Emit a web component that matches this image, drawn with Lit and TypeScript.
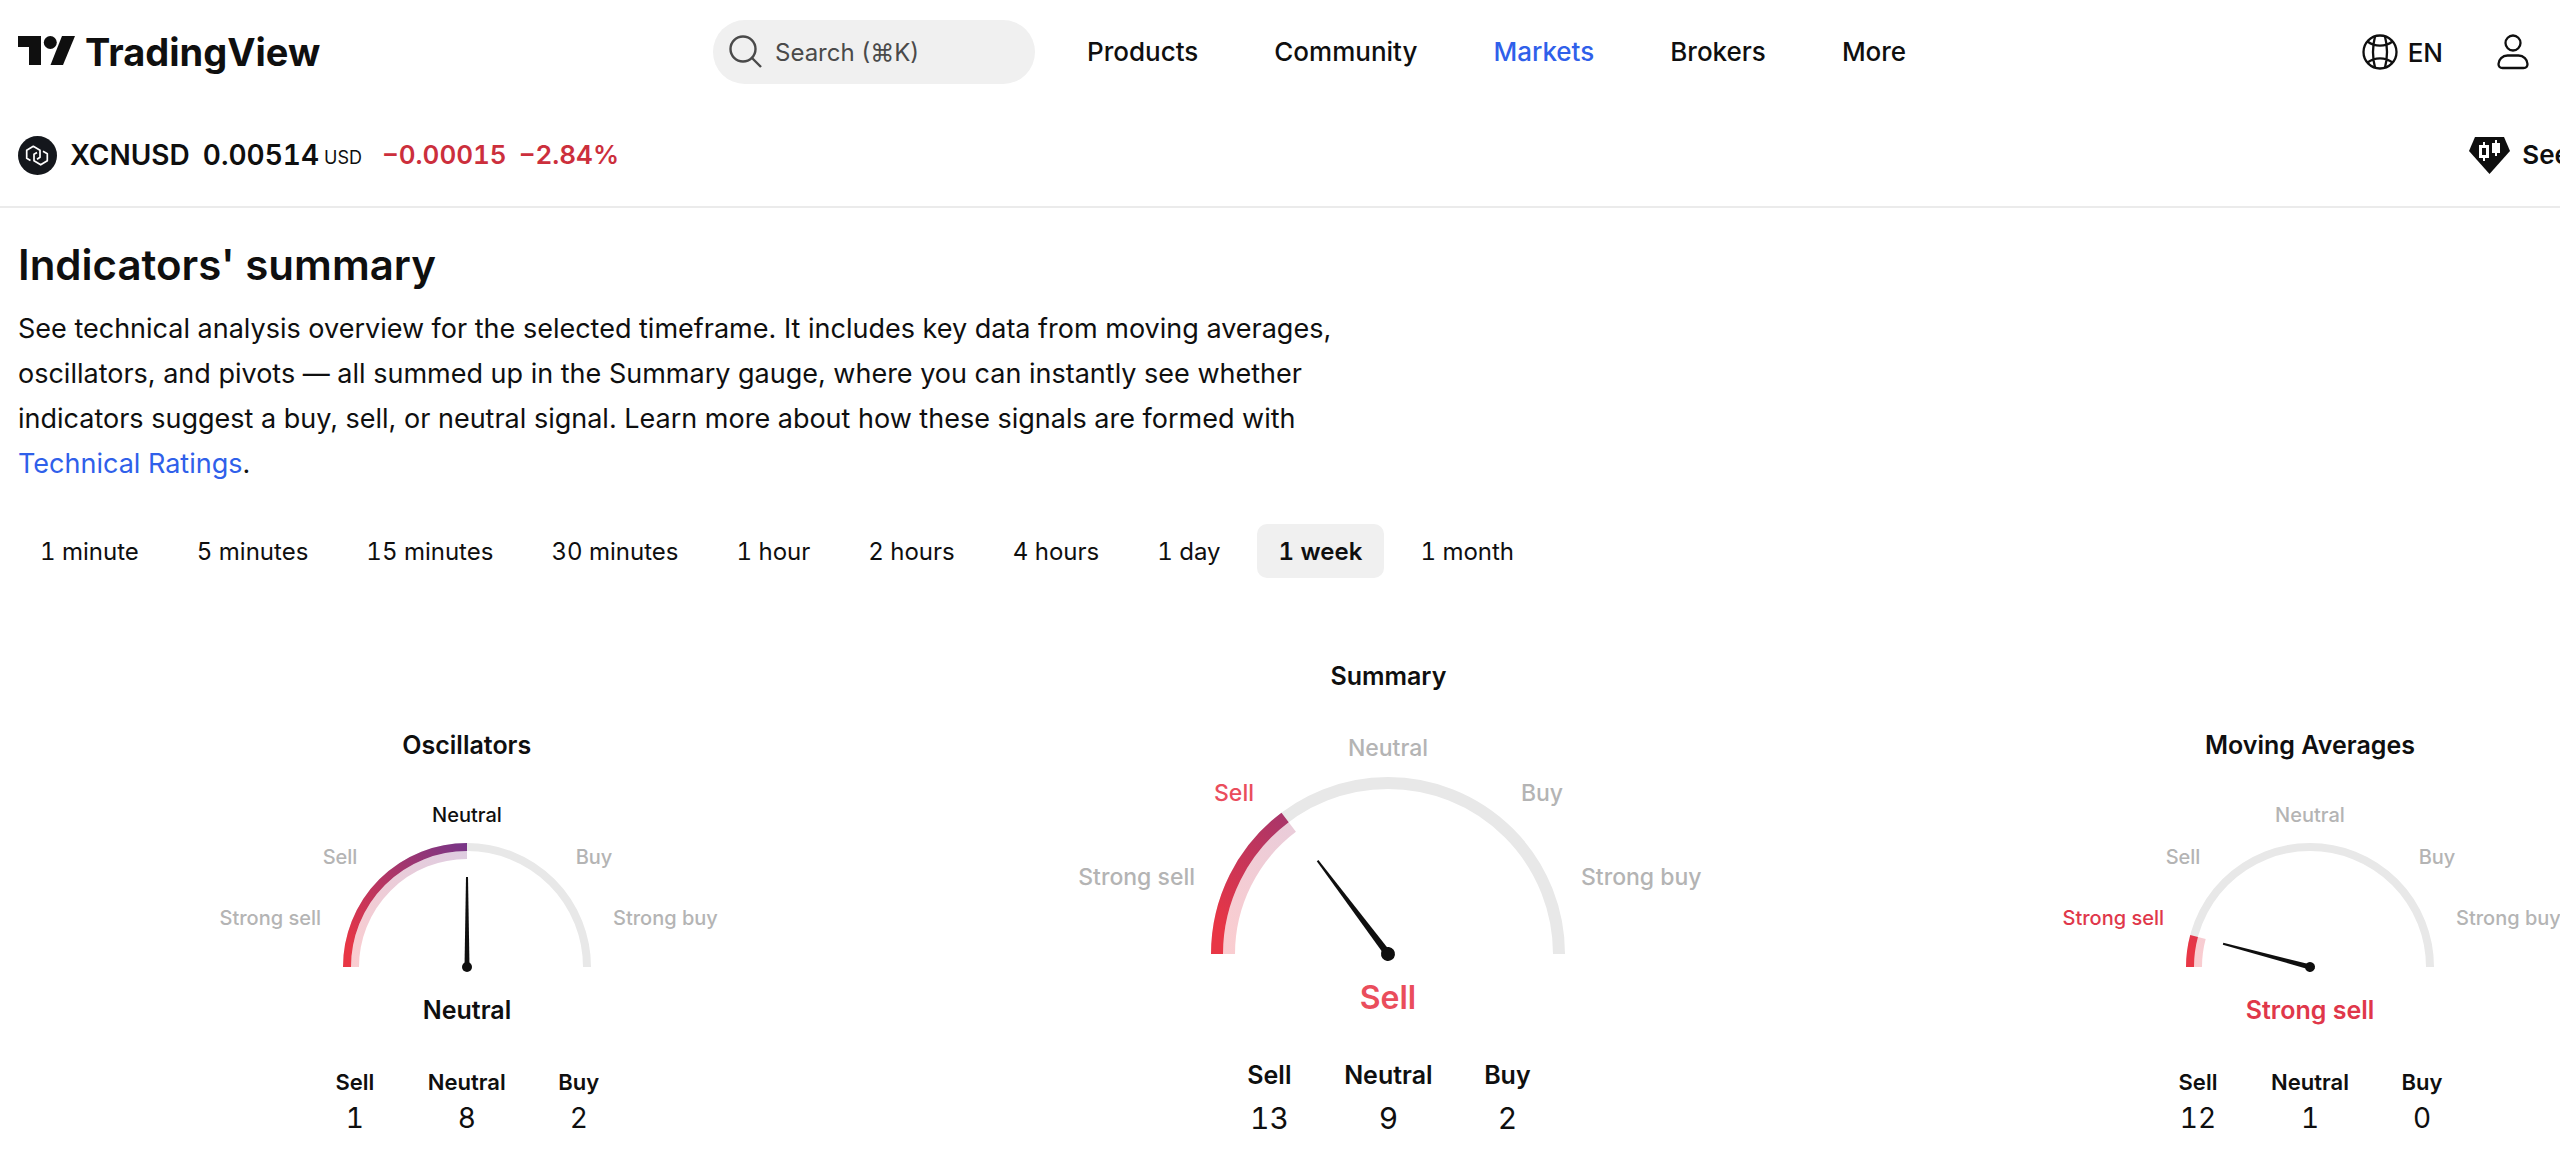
import { LitElement, html, css, svg } from "lit";
import { customElement, property, state } from "lit/decorators.js";
import { classMap } from "lit/directives/class-map.js";

type Rating = "strong-sell" | "sell" | "neutral" | "buy" | "strong-buy";

const RATING_LABELS: Record<Rating, string> = {
  "strong-sell": "Strong sell",
  sell: "Sell",
  neutral: "Neutral",
  buy: "Buy",
  "strong-buy": "Strong buy",
};

interface GaugeData {
  title: string;
  rating: Rating;
  angle: number;
  sell: number;
  neutral: number;
  buy: number;
  large: boolean;
}

interface Geometry {
  width: number;
  height: number;
  cy: number;
  radius: number;
  band: number;
  needle: number;
  hub: number;
  topY: number;
  midX: number;
  midY: number;
  sideX: number;
  sideY: number;
  resultY: number;
}

const SMALL: Geometry = {
  width: 560, height: 240, cy: 177, radius: 124, band: 8, needle: 90, hub: 5,
  topY: 32, midX: 127, midY: 74, sideX: 146, sideY: 135, resultY: 229,
};

const LARGE: Geometry = {
  width: 680, height: 300, cy: 233, radius: 177, band: 12, needle: 117, hub: 7,
  topY: 35, midX: 154, midY: 80, sideX: 193, sideY: 164, resultY: 288,
};

@customElement("rating-gauge")
export class RatingGauge extends LitElement {
  @property({ attribute: false }) data!: GaugeData;

  static styles = css`
    :host { display: block; color: #0f0f0f; }
    .gauge { display: flex; flex-direction: column; align-items: center; }
    .title { margin: 0 0 29px; font-size: 25px; line-height: 32px; font-weight: 600; }
    .dial { display: block; max-width: 100%; }
    .label { font-size: 20px; font-weight: 500; fill: #b4b4b4; }
    .result { font-size: 25px; font-weight: 600; }
    .large .label { font-size: 23px; }
    .large .result { font-size: 32px; }
    .label.strong-sell, .result.strong-sell { fill: #e0374a; }
    .label.sell, .result.sell { fill: #ea4d5c; }
    .label.neutral, .result.neutral { fill: #0f0f0f; }
    .label.buy, .label.strong-buy, .result.buy, .result.strong-buy { fill: #2f60ea; }
    .track { fill: none; stroke: #e8e8e8; }
    .value, .halo { fill: none; }
    .halo { stroke-opacity: 0.25; }
    .needle { fill: #0f0f0f; }
    .counts { display: grid; grid-template-columns: repeat(3, 112px); margin: 36px 0 0; text-align: center; }
    .large .counts { grid-template-columns: repeat(3, 119px); margin-top: 38px; }
    .name { font-size: 22px; line-height: 32px; font-weight: 600; }
    .number { margin: 0; font-size: 28px; line-height: 40px; font-variant-numeric: tabular-nums; }
    .large .name { font-size: 25px; margin-bottom: 7px; }
    .large .number { font-size: 30px; }
  `;

  private arc(g: Geometry, r: number, degrees: number) {
    const cx = g.width / 2;
    const a = (degrees * Math.PI) / 180;
    return `M${cx - r} ${g.cy}A${r} ${r} 0 0 1 ${cx - r * Math.cos(a)} ${g.cy - r * Math.sin(a)}`;
  }

  private label(g: Geometry, rating: Rating, x: number, y: number, anchor: string) {
    const active = rating === this.data.rating;
    return svg`<text class=${active ? `label ${rating}` : "label"} x=${x} y=${y} text-anchor=${anchor}>${RATING_LABELS[rating]}</text>`;
  }

  render() {
    const d = this.data;
    const g = d.large ? LARGE : SMALL;
    const cx = g.width / 2;
    const r = g.radius - g.band / 2;
    return html`
      <section class=${classMap({ gauge: true, large: d.large })}>
        <h3 class="title">${d.title}</h3>
        <svg class="dial" width=${g.width} height=${g.height} viewBox="0 0 ${g.width} ${g.height}" role="img" aria-label=${d.title}>
          <defs>
            <linearGradient id="sweep" gradientUnits="userSpaceOnUse" x1=${cx - g.radius} y1=${g.cy} x2=${cx} y2=${g.cy - g.radius}>
              <stop offset="0.1" stop-color="#e83645"></stop>
              <stop offset="1" stop-color="#763588"></stop>
            </linearGradient>
          </defs>
          <path class="track" stroke-width=${g.band} d=${this.arc(g, r, 180)}></path>
          <path class="halo" stroke="url(#sweep)" stroke-width=${g.band} d=${this.arc(g, r - g.band, d.angle)}></path>
          <path class="value" stroke="url(#sweep)" stroke-width=${g.band} d=${this.arc(g, r, d.angle)}></path>
          <g class="needle" transform="rotate(${d.angle} ${cx} ${g.cy})">
            <path d="M${cx} ${g.cy - g.hub / 2}L${cx - g.needle} ${g.cy - 1}v2L${cx} ${g.cy + g.hub / 2}z"></path>
            <circle cx=${cx} cy=${g.cy} r=${g.hub}></circle>
          </g>
          ${this.label(g, "strong-sell", cx - g.sideX, g.sideY, "end")}
          ${this.label(g, "sell", cx - g.midX, g.midY, "middle")}
          ${this.label(g, "neutral", cx, g.topY, "middle")}
          ${this.label(g, "buy", cx + g.midX, g.midY, "middle")}
          ${this.label(g, "strong-buy", cx + g.sideX, g.sideY, "start")}
          <text class="result ${d.rating}" x=${cx} y=${g.resultY} text-anchor="middle">${RATING_LABELS[d.rating]}</text>
        </svg>
        <dl class="counts">
          <div><dt class="name">Sell</dt><dd class="number">${d.sell}</dd></div>
          <div><dt class="name">Neutral</dt><dd class="number">${d.neutral}</dd></div>
          <div><dt class="name">Buy</dt><dd class="number">${d.buy}</dd></div>
        </dl>
      </section>
    `;
  }
}

const NAV = ["Products", "Community", "Markets", "Brokers", "More"];

const PERIODS = [
  "1 minute", "5 minutes", "15 minutes", "30 minutes", "1 hour",
  "2 hours", "4 hours", "1 day", "1 week", "1 month",
];

const GAUGES: GaugeData[] = [
  { title: "Oscillators", rating: "neutral", angle: 90, sell: 1, neutral: 8, buy: 2, large: false },
  { title: "Summary", rating: "sell", angle: 53, sell: 13, neutral: 9, buy: 2, large: true },
  { title: "Moving Averages", rating: "strong-sell", angle: 15, sell: 12, neutral: 1, buy: 0, large: false },
];

@customElement("app-root")
export class AppRoot extends LitElement {
  @state() private period = "1 week";

  static styles = css`
    :host {
      display: block;
      overflow: hidden;
      background: #fff;
      color: #0f0f0f;
      font-family: Inter, "Liberation Sans", sans-serif;
    }
    a { color: inherit; text-decoration: none; }
    button { font: inherit; color: inherit; border: 0; background: none; padding: 0; cursor: pointer; }
    svg { display: block; flex: none; }

    .header { display: grid; grid-template-columns: 695px 1fr auto; align-items: center; height: 104px; padding: 0 30px 0 18px; }
    .brand { display: flex; align-items: center; gap: 10px; font-size: 38px; font-weight: 700; line-height: 40px; }
    .menu { display: flex; align-items: center; gap: 52px; }
    .search { display: flex; align-items: center; gap: 12px; width: 322px; height: 64px; padding: 0 16px; border-radius: 32px; background: #f0f0f0; color: #4a4a4a; font-size: 24px; box-sizing: border-box; }
    .nav { display: flex; gap: 76px; font-size: 26px; font-weight: 500; line-height: 32px; }
    .current { color: #2f60ea; }
    .tools { display: flex; align-items: center; gap: 53px; }
    .lang { display: flex; align-items: center; gap: 10px; font-size: 26px; font-weight: 500; }

    .ticker { display: flex; align-items: center; height: 102px; padding-left: 18px; border-bottom: 2px solid #ebebeb; font-size: 28px; font-weight: 600; line-height: 32px; font-variant-numeric: tabular-nums; }
    .symbol { margin: 0 13px; font-size: inherit; font-weight: inherit; }
    .currency { margin: 6px 20px 0 5px; font-size: 18px; font-weight: 400; line-height: 26px; }
    .change { display: flex; gap: 12px; color: #cc2f3c; font-size: 26px; }
    .charts { display: flex; align-items: center; gap: 12px; margin: 0 -10px 0 auto; font-size: 26px; }

    .intro { padding: 32px 18px 0; }
    .heading { margin: 0 0 16px; font-size: 42px; font-weight: 600; line-height: 50px; }
    .text { max-width: 1340px; margin: 0; font-size: 27px; line-height: 45px; }
    .link { color: #2f60ea; }

    .periods { display: flex; gap: 14px; padding: 38px 18px 0; font-variant-numeric: tabular-nums; }
    .period { height: 54px; padding: 0 22px; border-radius: 10px; font-size: 24px; }
    .selected { background: #f0f0f0; font-weight: 600; }

    .gauges { display: grid; grid-template-columns: repeat(3, 1fr); align-items: end; width: 108%; margin-left: 6px; padding: 82px 0 27px; }
  `;

  render() {
    return html`
      <header class="header">
        <a class="brand" href="#">
          <svg width="57" height="32" viewBox="0 0 57 32" fill="#0f0f0f" aria-hidden="true">
            <path d="M0 0h23v29H11V11H0z"></path>
            <circle cx="32.3" cy="6.5" r="6.5"></circle>
            <path d="M44 0h13L45 29H32.5z"></path>
          </svg>
          TradingView
        </a>
        <div class="menu">
          <button class="search" type="button">
            <svg width="34" height="34" viewBox="0 0 34 34" fill="none" stroke="#4a4a4a" stroke-width="2.4" aria-hidden="true">
              <circle cx="14" cy="14" r="12.5"></circle>
              <path d="M23 23l9 9"></path>
            </svg>
            Search (⌘K)
          </button>
          <nav class="nav">
            ${NAV.map((n) => html`<a class=${classMap({ current: n === "Markets" })} href="#">${n}</a>`)}
          </nav>
        </div>
        <div class="tools">
          <button class="lang" type="button">
            <svg width="36" height="36" viewBox="0 0 36 36" fill="none" stroke="#0f0f0f" stroke-width="2.3" aria-hidden="true">
              <circle cx="18" cy="18" r="16.5"></circle>
              <path d="M13 2.5c-2.6 10-2.6 21 0 31M23 2.5c2.6 10 2.6 21 0 31M5.5 7.5c7.5 5.5 17.5 5.5 25 0M5.5 28.5c7.5-5.5 17.5-5.5 25 0"></path>
            </svg>
            EN
          </button>
          <button type="button" aria-label="Open user menu">
            <svg width="34" height="36" viewBox="0 0 34 36" fill="none" stroke="#0f0f0f" stroke-width="2.3" aria-hidden="true">
              <circle cx="17" cy="9" r="7.5"></circle>
              <path d="M11.5 21.5h11c5 0 9 4 9 8.5 0 2.5-1.5 4-4 4H6.5c-2.5 0-4-1.5-4-4 0-4.500 4-8.500 9-8.500z"></path>
            </svg>
          </button>
        </div>
      </header>

      <div class="ticker">
        <svg width="39" height="39" viewBox="0 0 39 39" fill="none" stroke="#fff" stroke-width="1.7" stroke-linejoin="round" aria-hidden="true">
          <circle cx="19.5" cy="19.5" r="19.5" fill="#14171c" stroke="none"></circle>
          <path d="M12.5 24.5L8.7 22.3V14.3L15.3 10.3L22 14.3V21.3L19 23.3"></path>
          <path d="M25 15.2L29.3 17.7V24.7L22.7 28.8L16 24.8V18.3L19 16.5"></path>
        </svg>
        <h1 class="symbol">XCNUSD</h1>
        <span>0.00514</span>
        <span class="currency">USD</span>
        <span class="change"><span>−0.00015</span><span>−2.84%</span></span>
        <a class="charts" href="#">
          <svg width="41" height="37" viewBox="0 0 41 37" fill="#0f0f0f" aria-hidden="true">
            <path d="M6 0h29l6 14-20.5 23L0 14z"></path>
            <path fill="#fff" d="M14 5h2v3h4v13h-4v3h-2v-3h-4V8h4z"></path>
            <path d="M13 11h4v7h-4z"></path>
            <path fill="#fff" d="M26 3h2v3h3v10h-3v3h-2v-3h-3V6h3z"></path>
          </svg>
          See
        </a>
      </div>

      <main>
        <section class="intro">
          <h2 class="heading">Indicators' summary</h2>
          <p class="text">
            See technical analysis overview for the selected timeframe. It includes key data from moving averages, oscillators, and pivots — all summed up in the Summary gauge, where you can instantly see whether indicators suggest a buy, sell, or neutral signal. Learn more about how these signals are formed with <a class="link" href="#">Technical Ratings</a>.
          </p>
        </section>
        <div class="periods" role="tablist" aria-label="Timeframe">
          ${PERIODS.map(
            (p) => html`<button
              type="button"
              role="tab"
              aria-selected=${p === this.period}
              class=${classMap({ period: true, selected: p === this.period })}
              @click=${() => (this.period = p)}
            >${p}</button>`,
          )}
        </div>
        <div class="gauges">
          ${GAUGES.map((g) => html`<rating-gauge .data=${g}></rating-gauge>`)}
        </div>
      </main>
    `;
  }
}
